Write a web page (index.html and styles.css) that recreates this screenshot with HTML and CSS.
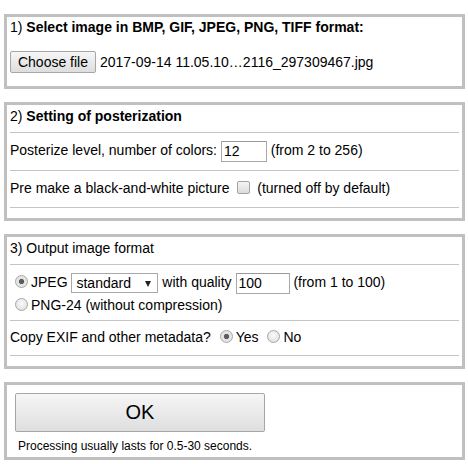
FILE: index.html
```html
<!DOCTYPE html>
<html>
<head>
<meta charset="utf-8">
<title>Posterize</title>
<link rel="stylesheet" href="styles.css">
</head>
<body>
<div class="page">
  <section class="box box1">
    <div class="title">1) <b>Select image in BMP, GIF, JPEG, PNG, TIFF format:</b></div>
    <div class="filerow"><span class="btn filebtn">Choose file</span> <span class="fname">2017-09-14 11.05.10…2116_297309467.jpg</span></div>
  </section>

  <section class="box">
    <div class="row title">2) <b>Setting of posterization</b></div>
    <div class="row">Posterize level, number of colors: <span class="txt w46">12</span> (from 2 to 256)</div>
    <div class="row">Pre make a black-and-white picture <span class="check"></span> (turned off by default)</div>
  </section>

  <section class="box">
    <div class="row title">3) Output image format</div>
    <div class="row two">
      <div class="line"><span class="radio on"></span>JPEG <span class="select">standard<span class="arrow"></span></span> with quality <span class="txt w54">100</span> (from 1 to 100)</div>
      <div class="line"><span class="radio"></span>PNG-24 (without compression)</div>
    </div>
    <div class="row exif">Copy EXIF and other metadata? <span class="radio on"></span>Yes <span class="radio"></span>No</div>
  </section>

  <section class="box box4">
    <div class="okbtn btn">OK</div>
    <div class="note">Processing usually lasts for 0.5-30 seconds.</div>
  </section>
</div>
</body>
</html>
```

FILE: styles.css
```css
html, body {
  margin: 0;
  padding: 0;
  background: #fff;
}
body {
  font-family: "Liberation Sans", Arial, sans-serif;
  font-size: 14px;
  color: #000;
}
.page {
  padding: 14px 3px 0 4px;
}
.box {
  border: 3px solid #c0c0c0;
  padding: 0 3px 10px 3px;
  margin-bottom: 13px;
}
.box1 {
  padding-bottom: 13px;
}
.box1 .title {
  line-height: 20px;
}
.filerow {
  margin-top: 14px;
  height: 22px;
  line-height: 22px;
  white-space: nowrap;
}
.btn {
  display: inline-block;
  box-sizing: border-box;
  border: 1px solid #a6a6a6;
  border-radius: 2px;
  background: linear-gradient(#f6f6f6, #dedede);
  text-align: center;
  color: #000;
}
.filebtn {
  width: 86px;
  height: 22px;
  line-height: 20px;
  vertical-align: top;
}
.fname {
  vertical-align: top;
}
.row {
  border-bottom: 1px solid #c4c4c4;
  padding: 7px 0 8px;
  line-height: 21px;
  white-space: nowrap;
}
.row.title {
  padding: 1px 0 6px;
  line-height: 20px;
}
.row.two {
  padding: 6px 0 3px;
}
.row.two .line {
  line-height: 23px;
}
.row.exif {
  padding: 6px 0 7px;
}
.txt {
  display: inline-block;
  box-sizing: border-box;
  height: 21px;
  line-height: 19px;
  border: 1px solid #a9a9a9;
  border-top-color: #9a9a9a;
  padding: 0 2px;
  vertical-align: middle;
  background: #fff;
}
.w46 { width: 46px; }
.w54 { width: 54px; }
.check {
  display: inline-block;
  box-sizing: border-box;
  width: 13px;
  height: 13px;
  margin: 0 3px 0 4px;
  border: 1px solid #a3a3a3;
  border-radius: 2px;
  background: linear-gradient(#f4f4f4, #dcdcdc);
  vertical-align: -1px;
}
.radio {
  display: inline-block;
  box-sizing: border-box;
  width: 13px;
  height: 13px;
  margin: 0 3px 0 5px;
  border: 1px solid #a6a6a6;
  border-radius: 50%;
  background: radial-gradient(circle at 50% 40%, #fbfbfb, #dadada);
  vertical-align: -1px;
}
.radio.on {
  background: radial-gradient(circle, #5c5c5c 0, #5c5c5c 2.2px, #e2e2e2 3px, #ececec 100%);
}
.select {
  position: relative;
  display: inline-block;
  box-sizing: border-box;
  width: 87px;
  height: 20px;
  line-height: 18px;
  border: 1px solid #a9a9a9;
  padding-left: 4px;
  vertical-align: middle;
  background: #fff;
}
.arrow {
  position: absolute;
  right: 6px;
  top: 7px;
  width: 0;
  height: 0;
  border-left: 3.5px solid transparent;
  border-right: 3.5px solid transparent;
  border-top: 6px solid #222;
}
.box4 {
  padding: 8px 3px 3px;
}
.okbtn {
  margin-left: 5px;
  width: 250px;
  height: 39px;
  line-height: 37px;
  font-size: 20px;
  display: block;
}
.note {
  margin-top: 7px;
  margin-left: 8px;
  font-size: 12px;
  line-height: 15px;
}
```
